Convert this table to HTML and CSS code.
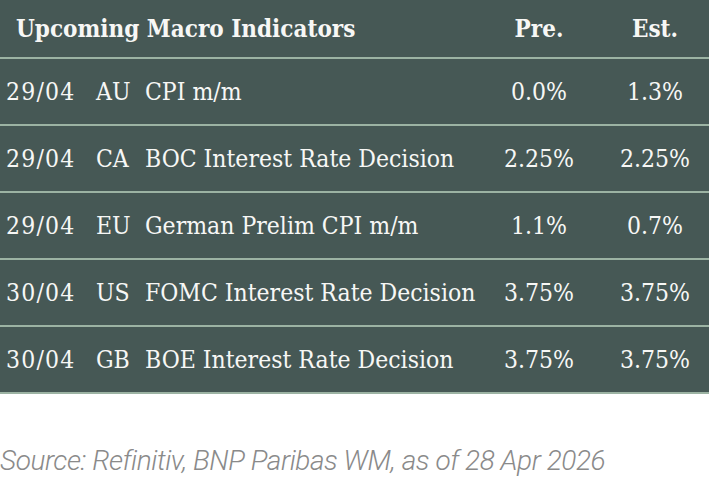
FILE: index.html
```html
<!DOCTYPE html>
<html lang="en">
<head>
<meta charset="utf-8">
<title>Upcoming Macro Indicators</title>
<link rel="stylesheet" href="styles.css">
</head>
<body>
<div class="table">
  <div class="row head">
    <div class="title">Upcoming Macro Indicators</div>
    <div class="num">Pre.</div>
    <div class="num est">Est.</div>
  </div>
  <div class="row">
    <div class="cell date">29/04</div>
    <div class="cell">AU</div>
    <div class="cell">CPI m/m</div>
    <div class="num">0.0%</div>
    <div class="num est">1.3%</div>
  </div>
  <div class="row">
    <div class="cell date">29/04</div>
    <div class="cell">CA</div>
    <div class="cell">BOC Interest Rate Decision</div>
    <div class="num">2.25%</div>
    <div class="num est">2.25%</div>
  </div>
  <div class="row">
    <div class="cell date">29/04</div>
    <div class="cell">EU</div>
    <div class="cell">German Prelim CPI m/m</div>
    <div class="num">1.1%</div>
    <div class="num est">0.7%</div>
  </div>
  <div class="row">
    <div class="cell date">30/04</div>
    <div class="cell">US</div>
    <div class="cell">FOMC Interest Rate Decision</div>
    <div class="num">3.75%</div>
    <div class="num est">3.75%</div>
  </div>
  <div class="row last">
    <div class="cell date">30/04</div>
    <div class="cell">GB</div>
    <div class="cell">BOE Interest Rate Decision</div>
    <div class="num">3.75%</div>
    <div class="num est">3.75%</div>
  </div>
</div>
<p class="source">Source: Refinitiv, BNP Paribas WM, as of 28 Apr 2026</p>
</body>
</html>
```
FILE: styles.css
```css
body {
  margin: 0;
  background: #ffffff;
}

.table {
  background: #465855;
  color: #f7f7f5;
  font-family: "DejaVu Serif Condensed", "DejaVu Serif", serif;
  font-size: 24.5px;
}

.row {
  display: grid;
  grid-template-columns: 90px 49px 342px 116px 112px;
  align-items: center;
  height: 65px;
  border-top: 2px solid #9cb3a3;
  white-space: nowrap;
}

.row.head {
  height: 57px;
  border-top: none;
  font-weight: bold;
  font-size: 24px;
}

.row.last {
  border-bottom: 2px solid #9cb3a3;
}

.title {
  grid-column: 1 / 4;
  padding-left: 16px;
}

.cell {
  padding-left: 6px;
}

.cell.date {
  letter-spacing: 1.2px;
}

.num {
  text-align: center;
}

.num.est {
  padding-left: 4px;
}

.source {
  margin: 0;
  padding-top: 52px;
  line-height: 30px;
  font-family: "Roboto", sans-serif;
  font-style: italic;
  font-weight: 300;
  font-size: 28px;
  letter-spacing: -0.45px;
  color: #8a8a8a;
  white-space: nowrap;
}
```
